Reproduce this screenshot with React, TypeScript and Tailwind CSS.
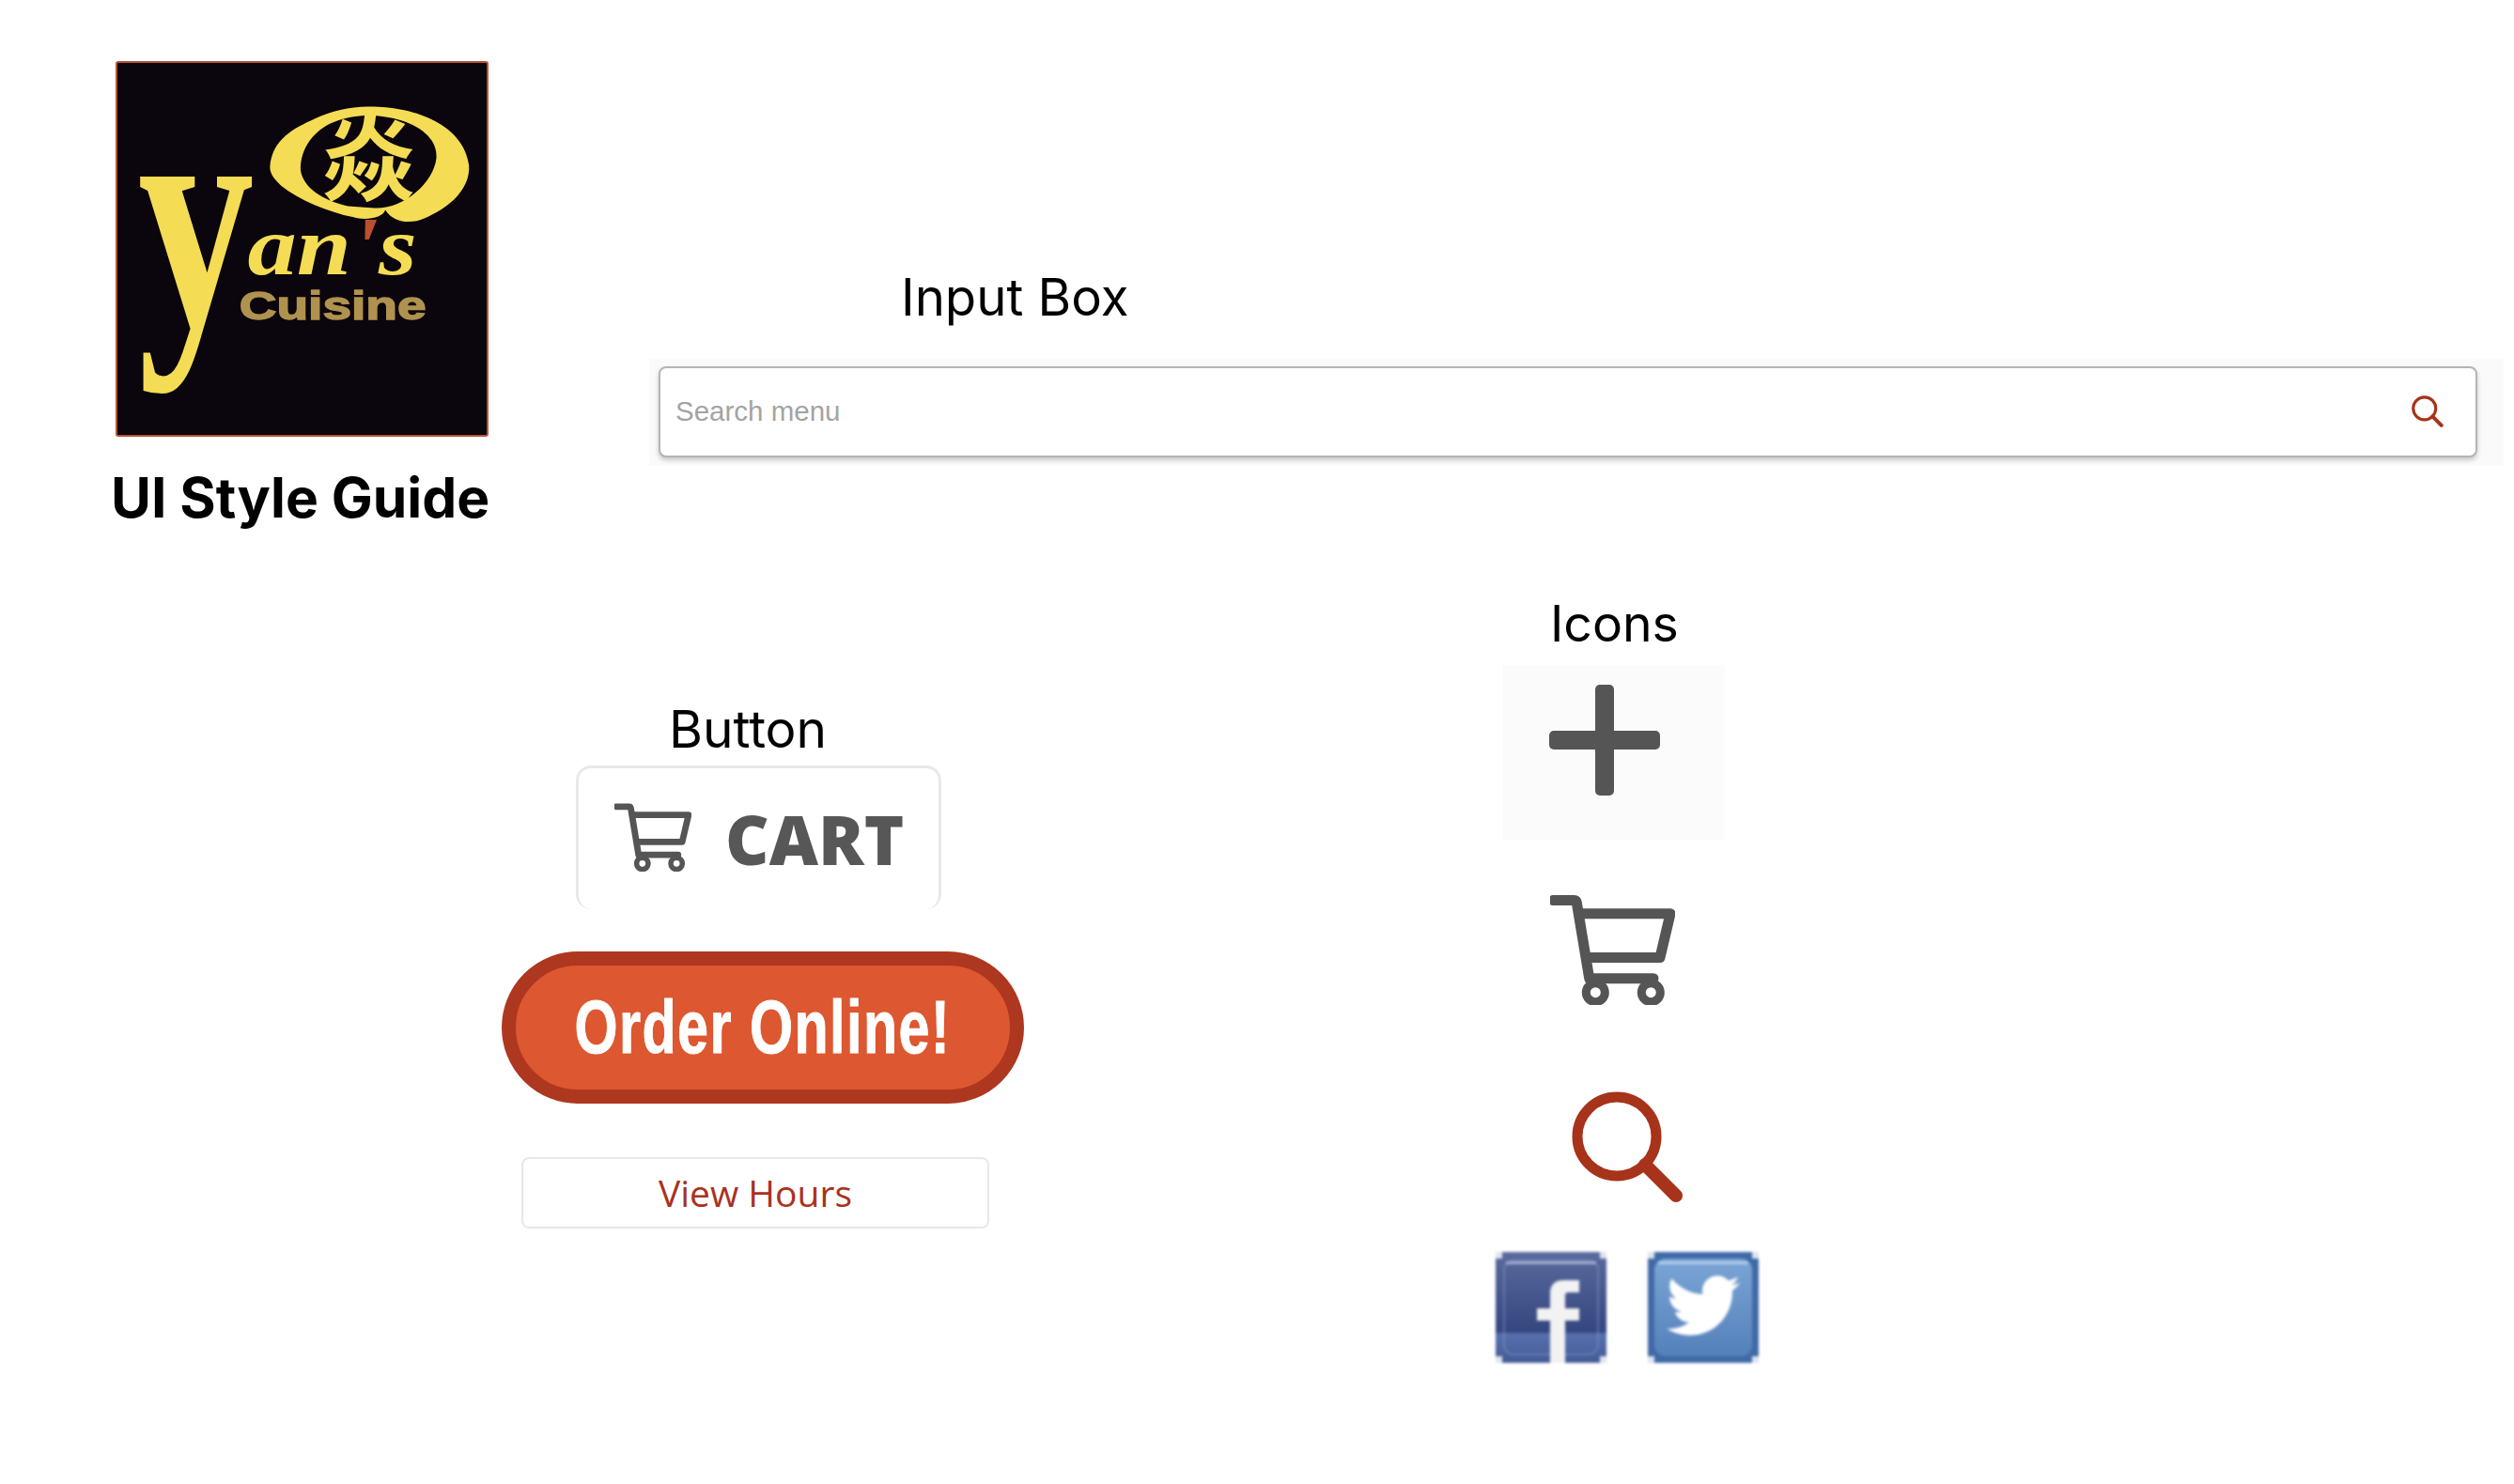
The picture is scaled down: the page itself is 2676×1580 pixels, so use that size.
function CartIcon({ className }: { className?: string }) {
  return (
    <svg viewBox="0 0 133 117" fill="none" stroke="#555555" strokeWidth={11} strokeLinejoin="round" strokeLinecap="round" className={className}>
      <path d="M3 5.5H25.5C27 5.5 28 6.5 28.3 8L41.7 88.7H110" />
      <path d="M32 19.7H128L117 66.5H39.5" />
      <circle cx="48.3" cy="103.7" r="10" strokeWidth={9} />
      <circle cx="107.3" cy="103.7" r="10" strokeWidth={9} />
    </svg>
  );
}

function SearchIcon({ className }: { className?: string }) {
  return (
    <svg viewBox="0 0 119 118" fill="none" stroke="#a6331a" strokeWidth={11} className={className}>
      <circle cx="48" cy="48" r="42" />
      <path d="M78 78L111 111" strokeWidth={14} strokeLinecap="round" />
    </svg>
  );
}

function Logo() {
  return (
    <svg viewBox="0 0 397 400" className="w-[397px] h-[400px] bg-[#0b050d] border-2 border-[#b5523a] rounded-[3px]">
      {/* brush ring */}
      <path
        fillRule="evenodd"
        fill="#f4dc55"
        d="M164 112C166 82 190 70 212 60C232 51 252 46 276 47C320 48 372 66 378 110C380 138 352 160 322 170C308 172 296 170 288 158C286 166 268 170 254 166C226 160 196 148 176 132C170 126 164 120 164 112ZM197 116C200 134 220 148 248 154L276 156C306 158 340 130 343 102C344 84 330 70 306 62C282 55 256 54 232 64C212 72 196 92 197 116Z"
      />
      <text x="270" y="140" fontSize="100" fontWeight="700" fill="#f4dc55" textAnchor="middle" fontFamily="'Noto Sans CJK SC', sans-serif">焱</text>
      {/* calligraphic wordmark */}
      <text x="22" y="281" fontSize="346" fontWeight="700" fill="#f4dc55" textLength="125" lengthAdjust="spacingAndGlyphs" fontFamily="'Liberation Serif', serif">y</text>
      <text x="140" y="227" fontSize="90" fontWeight="700" fontStyle="italic" fill="#f4dc55" textLength="182" lengthAdjust="spacingAndGlyphs" fontFamily="'Liberation Serif', serif">
        an<tspan fill="#b9502d">'</tspan>s
      </text>
      <text x="131" y="276" fontSize="43" fontWeight="700" fill="#b0924f" stroke="#b0924f" strokeWidth="1.5" textLength="201" lengthAdjust="spacingAndGlyphs" fontFamily="'Liberation Sans', sans-serif">Cuisine</text>
    </svg>
  );
}

function Corners() {
  return (
    <g fill="#dfe4ee">
      <rect width="7" height="7" />
      <rect x="111" width="7" height="7" />
      <rect y="111" width="7" height="7" />
      <rect x="111" y="111" width="7" height="7" />
    </g>
  );
}

function FacebookIcon() {
  return (
    <svg viewBox="0 0 118 118" className="w-[118px] h-[118px] blur-[1.5px]">
      <defs>
        <linearGradient id="fbBg" x1="0" y1="0" x2="0" y2="1">
          <stop offset="0" stopColor="#5a6a9e" />
          <stop offset="0.72" stopColor="#34467f" />
          <stop offset="0.74" stopColor="#5670ad" />
          <stop offset="1" stopColor="#445a96" />
        </linearGradient>
      </defs>
      <rect width="118" height="118" fill="url(#fbBg)" />
      <rect x="9" y="9" width="100" height="100" rx="10" fill="none" stroke="#8c99c3" strokeWidth="2" opacity="0.45" />
      <rect x="11" y="10" width="96" height="3" fill="#a4aed0" />
      <Corners />
      <path fill="#f2f2f2" d="M58 118V73H44V60H58V44C58 34 64 30 72 30H89V43H78C75 43 74 44 74 47V60H89V73H74V118Z" />
    </svg>
  );
}

function TwitterIcon() {
  return (
    <svg viewBox="0 0 118 118" className="w-[118px] h-[118px] blur-[1.5px]">
      <defs>
        <linearGradient id="twBg" x1="0" y1="0" x2="0" y2="1">
          <stop offset="0" stopColor="#7ba5d6" />
          <stop offset="1" stopColor="#5480ba" />
        </linearGradient>
      </defs>
      <rect width="118" height="118" fill="#3f6aa6" />
      <rect x="7" y="7" width="104" height="104" rx="12" fill="url(#twBg)" />
      <rect x="11" y="10" width="96" height="3" fill="#b5cfea" />
      <Corners />
      <svg x="20" y="18" width="78" height="78" viewBox="0 0 512 512">
        <path fill="#ffffff" d="M459.37 151.716c.325 4.548.325 9.097.325 13.645 0 138.72-105.583 298.558-298.558 298.558-59.452 0-114.68-17.219-161.137-47.106 8.447.974 16.568 1.299 25.34 1.299 49.055 0 94.213-16.568 130.274-44.832-46.132-.975-84.792-31.188-98.112-72.772 6.498.974 12.995 1.624 19.818 1.624 9.421 0 18.843-1.3 27.614-3.573-48.081-9.747-84.143-51.98-84.143-102.985v-1.299c13.969 7.797 30.214 12.67 47.431 13.319-28.264-18.843-46.781-51.005-46.781-87.391 0-19.492 5.197-37.36 14.294-52.954 51.655 63.675 129.3 105.258 216.365 109.807-1.624-7.797-2.599-15.918-2.599-24.04 0-57.828 46.782-104.934 104.934-104.934 30.213 0 57.502 12.67 76.67 33.137 23.715-4.548 46.456-13.32 66.599-25.34-7.798 24.366-24.366 44.833-46.132 57.827 21.117-2.273 41.584-8.122 60.426-16.243-14.292 20.791-32.161 39.308-52.628 54.253z" />
      </svg>
    </svg>
  );
}

export default function App() {
  return (
    <div className="w-[2676px] h-[1580px] bg-white text-black font-['Inter',sans-serif]">
      {/* header row */}
      <div className="flex items-start h-[632px] pl-[118px] pt-[65px]">
        <div className="w-[410px] shrink-0">
          <div className="ml-[5px] h-[400px]">
            <Logo />
          </div>
          <h1 className="mt-[36px] text-[58.7px] leading-none font-bold whitespace-nowrap">UI Style Guide</h1>
        </div>
        <div className="ml-[163px] w-[1974px]">
          <div className="ml-[268px] mt-[224px] text-[54.5px] leading-none">Input Box</div>
          <div className="mt-[38px] bg-[#fafafa] pl-[10px] pr-[28px] pt-[8px] pb-[9px]">
            <div className="h-[97px] flex items-center justify-between bg-white border-2 border-[#b5b5b5] rounded-[8px] shadow-[0_3px_5px_rgba(0,0,0,0.2)] pl-[16px] pr-[34px]">
              <span className="text-[29.5px] text-[#a3a3a3] font-['Liberation_Sans',sans-serif]">Search menu</span>
              <SearchIcon className="w-[34px] h-[34px]" />
            </div>
          </div>
        </div>
      </div>

      {/* components row */}
      <div className="flex items-start">
        <div className="ml-[534px] w-[556px] shrink-0 mt-[117px]">
          <div className="ml-[178px] text-[55px] leading-none">Button</div>
          <div className="ml-[79px] mt-[11px] w-[389px] h-[153px] flex items-center border-x-[3px] border-t-[3px] border-b-0 border-[#e8e8e8] rounded-[16px] pl-[38px]">
            <CartIcon className="w-[82px] h-[73px] -mt-[3px]" />
            <span className="ml-[36px] text-[72px] leading-none font-extrabold text-[#575757] font-['Open_Sans',sans-serif]">CART</span>
          </div>
          <div className="mt-[45px] h-[162px] flex items-center justify-center bg-[#dd5730] border-[15px] border-[#ae3720] rounded-full">
            <span className="inline-block scale-x-[0.74] tracking-[2px] text-[80px] leading-none font-bold text-white font-['Liberation_Sans',sans-serif] whitespace-nowrap [-webkit-text-stroke:1px_white]">Order Online!</span>
          </div>
          <div className="ml-[21px] mt-[57px] w-[498px] h-[76px] flex items-center justify-center border-2 border-[#e8e8e8] rounded-[8px] text-[39px] text-[#a93220] font-['Open_Sans',sans-serif]">
            View Hours
          </div>
        </div>

        <div className="ml-[502px] w-[280px] shrink-0 flex flex-col">
          <div className="ml-[58px] mt-[5px] text-[53.5px] leading-none">Icons</div>
          <div className="ml-[8px] mt-[17px] w-[236px] h-[186px] bg-[#fbfbfb] pt-[21px] pl-[49px]">
            <div className="relative w-[118px] h-[118px]">
              <div className="absolute left-[49px] top-0 w-[20px] h-[118px] rounded-[5px] bg-[#555555]" />
              <div className="absolute left-0 top-[49px] w-[118px] h-[20px] rounded-[5px] bg-[#555555]" />
            </div>
          </div>
          <CartIcon className="ml-[58px] mt-[59px] w-[133px] h-[117px]" />
          <SearchIcon className="ml-[81px] mt-[92px] w-[119px] h-[118px]" />
          <div className="mt-[53px] flex gap-[44px]">
            <FacebookIcon />
            <TwitterIcon />
          </div>
        </div>
      </div>
    </div>
  );
}
